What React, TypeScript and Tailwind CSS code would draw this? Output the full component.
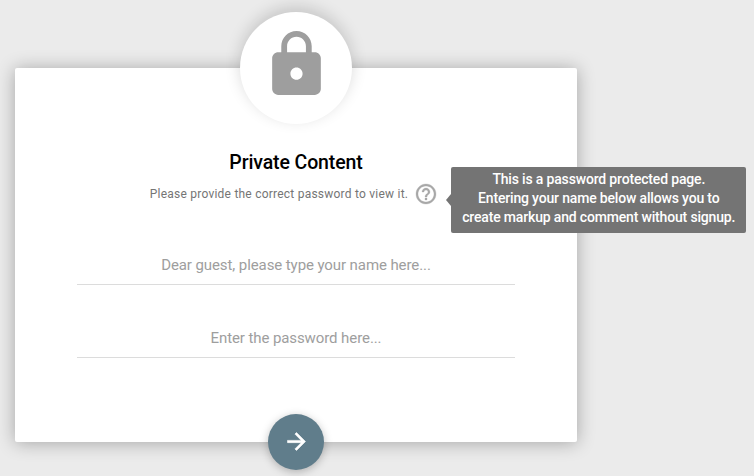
import React from "react";

function LockIcon() {
  return (
    <svg viewBox="0 0 24 24" className="-mt-2 h-[73px] w-[73px] shrink-0 fill-[#9e9e9e]" aria-hidden="true">
      <path d="M18 8h-1V6c0-2.76-2.24-5-5-5S7 3.24 7 6v2H6c-1.1 0-2 .9-2 2v10c0 1.1.9 2 2 2h12c1.1 0 2-.9 2-2V10c0-1.1-.9-2-2-2zm-6 9c-1.1 0-2-.9-2-2s.9-2 2-2 2 .9 2 2-.9 2-2 2zm3.1-9H8.9V6c0-1.71 1.39-3.1 3.1-3.1 1.71 0 3.1 1.39 3.1 3.1v2z" />
    </svg>
  );
}

function HelpIcon() {
  return (
    <svg viewBox="0 0 24 24" className="size-6 fill-[#a8a8a8] stroke-[#a8a8a8] stroke-[0.3]" aria-hidden="true">
      <path d="M11 18h2v-2h-2v2zm1-16C6.48 2 2 6.48 2 12s4.48 10 10 10 10-4.48 10-10S17.52 2 12 2zm0 18c-4.41 0-8-3.59-8-8s3.59-8 8-8 8 3.59 8 8-3.59 8-8 8zm0-14c-2.21 0-4 1.79-4 4h2c0-1.1.9-2 2-2s2 .9 2 2c0 2-3 1.75-3 5h2c0-2.25 3-2.5 3-5 0-2.21-1.79-4-4-4z" />
    </svg>
  );
}

function ArrowIcon() {
  return (
    <svg viewBox="0 0 24 24" className="-mt-0.5 size-[27px] fill-white stroke-white stroke-[0.5]" aria-hidden="true">
      <path d="M12 4l-1.41 1.41L16.17 11H4v2h12.17l-5.58 5.59L12 20l8-8z" />
    </svg>
  );
}

function Tooltip() {
  return (
    <div className="absolute top-[-15px] left-[37px] h-[66px] w-[295px] rounded-[2px] bg-[#747474] pt-[3px] text-center text-[14px] leading-[19px] font-medium tracking-[-0.17px] whitespace-nowrap text-white">
      <span className="absolute top-[27px] -left-[5px] border-y-[6px] border-r-[5px] border-y-transparent border-r-[#747474]" />
      This is a password protected page.
      <br />
      Entering your name below allows you to
      <br />
      create markup and comment without signup.
    </div>
  );
}

const inputClass =
  "block h-10 w-full shrink-0 border-b border-[#dcdcdc] bg-transparent text-center text-[15px] tracking-[-0.09px] text-[#333] outline-none placeholder:text-[#9e9e9e]";

export default function App() {
  return (
    <main className="h-[476px] w-[754px] overflow-hidden bg-[#ebebeb] pt-[68px] pl-[15px] font-[Roboto,sans-serif]">
      <form className="flex h-[374px] w-[562px] flex-col items-center rounded-[2px] bg-white px-[62px] shadow-[0_1px_18px_rgba(0,0,0,0.3)]">
        <div className="-mt-14 flex size-28 shrink-0 items-center justify-center rounded-full bg-white shadow-[0_-5px_16px_rgba(0,0,0,0.16)]">
          <LockIcon />
        </div>
        <h1 className="mt-[25px] shrink-0 text-[19.5px] leading-7 font-medium tracking-[-0.12px] text-black">Private Content</h1>
        <div className="mt-[5px] mr-1 flex h-6 shrink-0 items-center gap-1.5">
          <p className="text-[12px] tracking-[0.23px] whitespace-nowrap text-[#757575]">Please provide the correct password to view it.</p>
          <div className="relative z-10">
            <HelpIcon />
            <Tooltip />
          </div>
        </div>
        <input className={inputClass + " mt-[39px]"} placeholder="Dear guest, please type your name here..." />
        <input className={inputClass + " mt-[33px]"} placeholder="Enter the password here..." />
        <button
          type="button"
          aria-label="Continue"
          className="mt-14 flex size-14 shrink-0 items-center justify-center rounded-full bg-[#607d8b] shadow-[0_2px_8px_rgba(0,0,0,0.25)]"
        >
          <ArrowIcon />
        </button>
      </form>
    </main>
  );
}
